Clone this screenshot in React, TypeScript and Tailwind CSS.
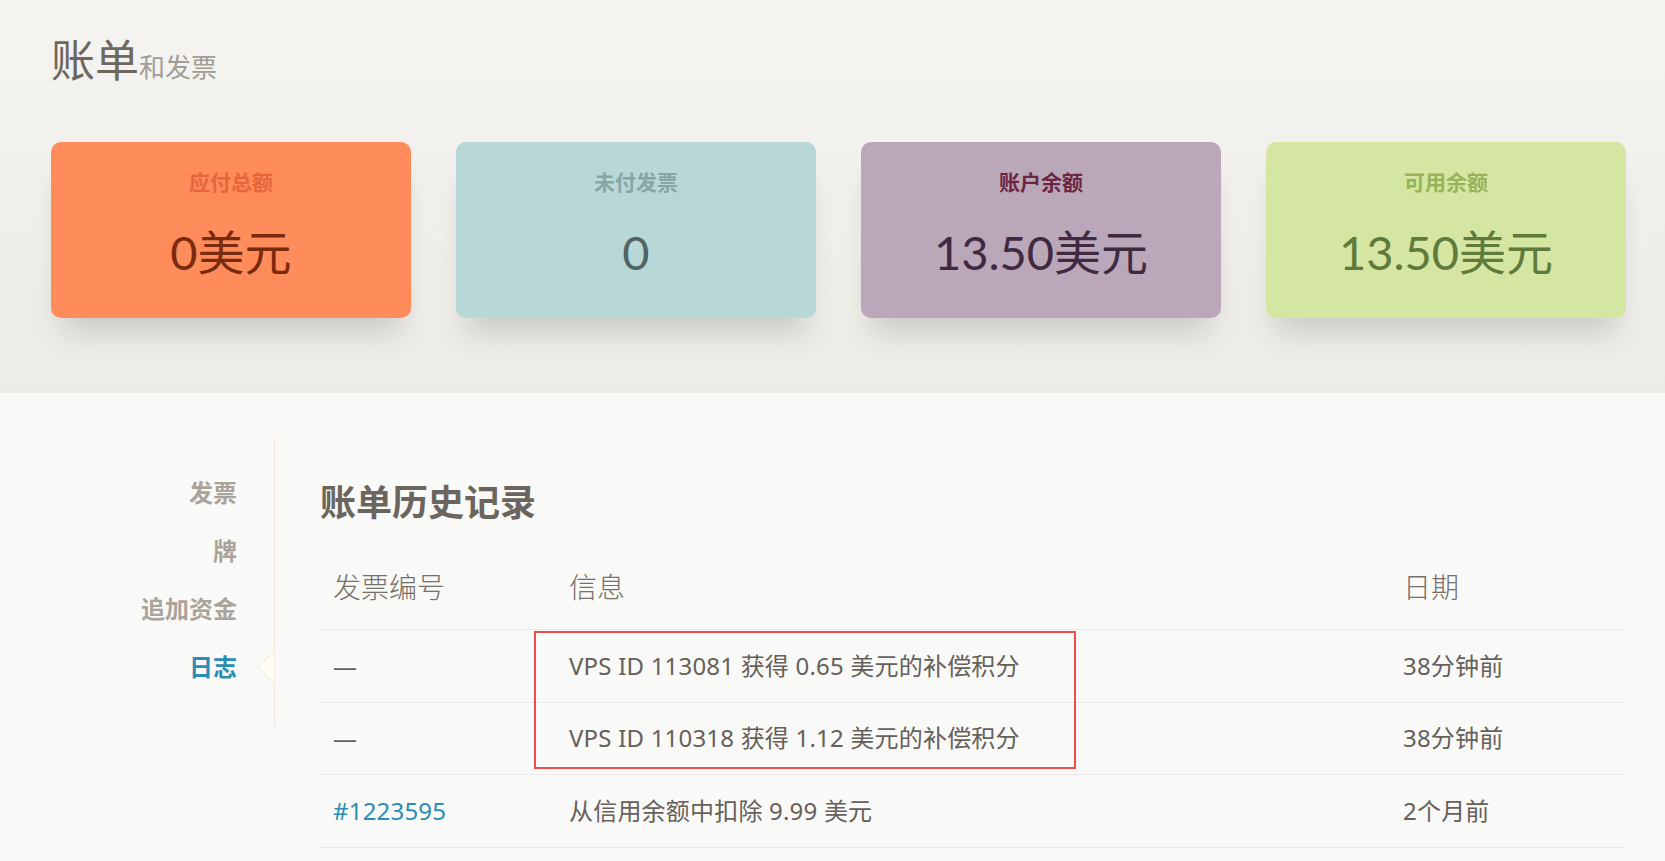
import React from "react";

const cards = [
  { label: "应付总额", value: "0美元", bg: "bg-[#ff8c5a]", lc: "text-[#e8643b]", vc: "text-[#7a2a0f]" },
  { label: "未付发票", value: "0", bg: "bg-[#b8d8d8]", lc: "text-[#86a6a5]", vc: "text-[#4f6464]" },
  { label: "账户余额", value: "13.50美元", bg: "bg-[#baa7ba]", lc: "text-[#6d2540]", vc: "text-[#3f2a42]" },
  { label: "可用余额", value: "13.50美元", bg: "bg-[#d5e6a2]", lc: "text-[#98b25a]", vc: "text-[#5f7a3b]" },
];

const nav = [
  { t: "发票", active: false },
  { t: "牌", active: false },
  { t: "追加资金", active: false },
  { t: "日志", active: true },
];

const rows = [
  { id: "—", link: false, info: "VPS ID 113081 获得 0.65 美元的补偿积分", date: "38分钟前" },
  { id: "—", link: false, info: "VPS ID 110318 获得 1.12 美元的补偿积分", date: "38分钟前" },
  { id: "#1223595", link: true, info: "从信用余额中扣除 9.99 美元", date: "2个月前" },
];

export default function App() {
  return (
    <div className="min-h-screen bg-[#f9f9f7] font-['Noto_Sans','Noto_Sans_CJK_SC',sans-serif]">
      <header className="h-[393px] bg-linear-to-b from-[#f5f4f1] to-[#ecebe6] pl-[51px] pr-[39px] pt-[38px]">
        <h1 className="flex items-baseline leading-none text-[#6e6760]">
          <span className="text-[44px] font-normal">账单</span>
          <span className="text-[26px] text-[#a29c96]">和发票</span>
        </h1>
        <div className="mt-[60px] grid grid-cols-4 gap-[45px]">
          {cards.map((c) => (
            <div
              key={c.label}
              className={`${c.bg} h-[176px] rounded-[10px] shadow-[0_24px_28px_-10px_rgba(0,0,0,0.15)] flex flex-col items-center pt-[25px]`}
            >
              <div className={`${c.lc} text-[21px] font-bold leading-[30px]`}>{c.label}</div>
              <div className={`${c.vc} mt-[28px] text-[47px] leading-[55px] font-['Lato','Noto_Sans_CJK_SC',sans-serif]`}>
                {c.value}
              </div>
            </div>
          ))}
        </div>
      </header>

      <main className="flex items-start">
        <aside className="mt-[45px] w-[275px] shrink-0 border-r border-[#efe4d6] pt-[26px] pb-[30px]">
          <ul>
            {nav.map((n) => (
              <li
                key={n.t}
                className={`relative h-[58px] flex items-center justify-end pr-[37px] text-[24px] font-bold ${
                  n.active ? "text-[#2b8db3]" : "text-[#aaa39a]"
                }`}
              >
                {n.t}
                {n.active && (
                  <svg
                    className="absolute right-[-1px] top-1/2 -translate-y-1/2"
                    width="18"
                    height="34"
                    viewBox="0 0 18 34"
                  >
                    <polygon points="18,0 1,17 18,34" fill="#fffcf3" stroke="#efe4d6" strokeWidth="1" />
                  </svg>
                )}
              </li>
            ))}
          </ul>
        </aside>

        <section className="flex-1 pl-[45px] pr-[40px]">
          <h2 className="mt-[88px] text-[36px] font-bold leading-[43px] text-[#6b655e]">账单历史记录</h2>
          <div className="mt-[21px]">
            <div className="grid grid-cols-[236px_834px_1fr] h-[85px] items-center border-b border-[#ebe9e5] text-[28px] font-light text-[#77706a]">
              <div className="pl-[13px]">发票编号</div>
              <div className="pl-[13px]">信息</div>
              <div className="pl-[13px]">日期</div>
            </div>
            <div className="relative">
              {rows.map((r, i) => (
                <div
                  key={i}
                  className="grid grid-cols-[236px_834px_1fr] h-[72.5px] items-center border-b border-[#ebe9e5] text-[24px] tracking-[0.2px] text-[#66605a]"
                >
                  <div className={`pl-[13px] ${r.link ? "text-[#2b8db3]" : ""}`}>{r.id}</div>
                  <div className="pl-[13px]">{r.info}</div>
                  <div className="pl-[13px]">{r.date}</div>
                </div>
              ))}
              <div className="pointer-events-none absolute left-[214px] top-[1px] h-[138px] w-[542px] border-2 border-[#f04c4c]" />
            </div>
          </div>
        </section>
      </main>
    </div>
  );
}
